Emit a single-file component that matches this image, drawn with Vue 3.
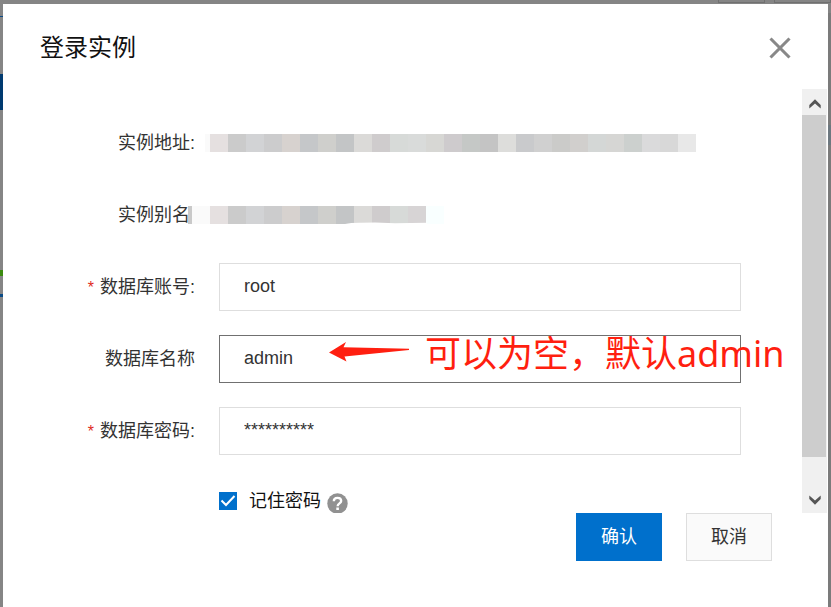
<script setup>
import { ref } from 'vue'

const account = ref('root')
const database = ref('admin')
const password = ref('**********')
const remember = ref(true)

const addressTiles = [
  '#e5e0e0', '#cbcbcb', '#d2d3d5', '#cccccd', '#d7d2cf', '#c5c7c9', '#cfcfcc', '#c3c5c6', '#dbdad8',
  '#cfcccd', '#d7dad8', '#d9dbda', '#d7d7d4', '#cecbcd', '#c5c8c6', '#c4c4c4', '#dddddb', '#c9cacc',
  '#d0d0d0', '#cbcbc9', '#d1cfcd', '#d4d7d6', '#d6d6d4', '#ccd0ce', '#dadadb', '#d8d8d8', '#e8e8e8'
]
const aliasTiles = [...addressTiles.slice(0, 11), '#d7d4d5', '#f9ffff']
</script>

<template>
  <div class="page">
    <div class="backdrop" aria-hidden="true">
      <i class="bg-line"></i>
      <i class="bg-nav"></i>
      <i class="bg-leaf"></i>
      <i class="bg-mark"></i>
      <i class="bg-box one"></i>
      <i class="bg-box two"></i>
      <i class="bg-right"></i>
      <i class="bg-check"></i>
    </div>

    <section class="dialog" role="dialog" aria-labelledby="dialog-title">
      <header class="head">
        <h1 id="dialog-title">登录实例</h1>
        <button class="close" type="button" aria-label="关闭">
          <svg viewBox="0 0 22 22" width="22" height="22">
            <path d="M1.500 1.500 20.500 20.500M20.500 1.500 1.500 20.500" fill="none" stroke="#888" stroke-width="3.100" />
          </svg>
        </button>
      </header>

      <form id="login" class="body" @submit.prevent>
        <div class="fields">
          <div class="row">
            <span class="label">实例地址:</span>
            <div class="mosaic">
              <i class="edge"></i>
              <i v-for="(c, n) in addressTiles" :key="n" class="tile" :style="{ background: c }"></i>
            </div>
          </div>
          <div class="row">
            <span class="label short">实例别名</span>
            <div class="mosaic wide">
              <i class="sliver"></i>
              <i class="pale"></i>
              <i v-for="(c, n) in aliasTiles" :key="n" class="tile" :style="{ background: c }"></i>
              <svg class="smear" viewBox="0 0 82 3" width="82" height="3"><path d="M0 3Q6 1.700 16 1.800L30 1.400 50 2.200 82 1.700V3Z" fill="#fff" /></svg>
            </div>
          </div>
          <div class="row">
            <label class="label" for="account"><b>*</b>数据库账号:</label>
            <div class="control"><input id="account" v-model="account" class="text" type="text" /></div>
          </div>
          <div class="row">
            <label class="label" for="database">数据库名称</label>
            <div class="control">
              <input id="database" v-model="database" class="text active" type="text" />
              <svg class="arrow" viewBox="0 0 82 22" width="82" height="22">
                <path d="M0 11.500 17 1 14.500 6.200 80 7.800V9L15.500 15.500 17.500 20.500Z" fill="#ff1f10" />
              </svg>
              <span class="note">可以为空，默认admin</span>
            </div>
          </div>
          <div class="row">
            <label class="label" for="password"><b>*</b>数据库密码:</label>
            <div class="control"><input id="password" v-model="password" class="text" type="text" autocomplete="off" /></div>
          </div>
          <div class="row remember">
            <input id="remember" v-model="remember" class="check" type="checkbox" />
            <svg class="tick" viewBox="0 0 18 18" width="18" height="18" aria-hidden="true">
              <path d="M2.500 8.500 7 13 15.500 4" fill="none" stroke="#fff" stroke-width="2" />
            </svg>
            <label for="remember">记住密码</label>
            <svg class="help" viewBox="0 0 21 21" width="21" height="21" aria-hidden="true">
              <circle cx="10.500" cy="10.500" r="10.200" fill="#919191" />
              <path d="M6.800 8.300C6.800 6 8.300 4.900 10.500 4.900S14.200 6.100 14.200 8C14.200 10.200 10.600 10.600 10.600 13.200" fill="none" stroke="#fff" stroke-width="2.300" />
              <rect x="9.300" y="14.500" width="2.600" height="2.500" fill="#fff" />
            </svg>
          </div>
        </div>
        <div class="scroll" aria-hidden="true">
          <div class="cap up">
            <svg viewBox="0 0 12 10" width="12" height="10"><path d="M.3 9.500V6L6 .3 11.700 6V9.500L6 4.400Z" fill="#555" /></svg>
          </div>
          <div class="track"><div class="thumb"></div></div>
          <div class="cap">
            <svg viewBox="0 0 12 10" width="12" height="10"><path d="M.3 .5V4L6 9.700 11.700 4V.5L6 5.600Z" fill="#555" /></svg>
          </div>
        </div>
      </form>

      <footer class="foot">
        <button class="btn primary" type="submit" form="login">确认</button>
        <button class="btn" type="button">取消</button>
      </footer>
    </section>
  </div>
</template>

<style>
body {
  background: #858585;
}
</style>

<style scoped>
* {
  box-sizing: border-box;
}
.page {
  position: relative;
  display: flex;
  min-height: 100vh;
  padding: 4px 3px 0;
  overflow: hidden;
  font-family: "Liberation Sans", "Noto Sans CJK SC", sans-serif;
  font-size: 18px;
  line-height: 24px;
  color: #333;
}
.backdrop {
  position: absolute;
  inset: 0;
  background: #858585;
}
.backdrop i {
  position: absolute;
}
.bg-line {
  left: 0;
  top: 16px;
  width: 3px;
  height: 1px;
  background: #0a4a85;
}
.bg-nav {
  left: 0;
  top: 74px;
  width: 3px;
  height: 36px;
  background: #003a70;
}
.bg-leaf {
  left: 0;
  top: 270px;
  width: 3px;
  height: 6px;
  background: #3b8a10;
}
.bg-mark {
  left: 0;
  top: 294px;
  width: 3px;
  height: 3px;
  background: #0a4a85;
}
.bg-box {
  top: 0;
  height: 3px;
  border: 1px solid #707070;
  border-top: 0;
}
.bg-box.one {
  right: 66px;
  width: 47px;
}
.bg-box.two {
  right: 0;
  width: 57px;
}
.bg-right {
  right: 0;
  top: 13px;
  bottom: 0;
  width: 3px;
  background: #7b7b7b;
}
.bg-check {
  right: 0;
  top: 125px;
  width: 3px;
  height: 20px;
  background: #6d7880;
}
.dialog {
  position: relative;
  flex: 1;
  min-width: 0;
  background: #fff;
}
.head {
  display: flex;
  align-items: center;
  justify-content: space-between;
  padding: 28px 37px 25px 37px;
}
h1 {
  margin: 0;
  font-size: 24px;
  line-height: 32px;
  font-weight: 400;
  color: #111;
}
.close {
  display: flex;
  padding: 0;
  border: 0;
  background: none;
}
.body {
  display: flex;
  padding-right: 1px;
  overflow: hidden;
}
.fields {
  flex: 1;
  min-width: 0;
  padding: 30px 61px 0 0;
}
.row {
  display: flex;
  align-items: center;
  gap: 24px;
  height: 48px;
  margin-bottom: 24px;
}
.label {
  flex: none;
  width: 192px;
  text-align: right;
  white-space: nowrap;
}
.label.short {
  padding-right: 5px;
}
.label b {
  margin-right: 6px;
  font-size: 16px;
  font-weight: 400;
  color: #e02b1d;
}
.control {
  position: relative;
  flex: 1;
  min-width: 0;
}
.text {
  display: block;
  width: 100%;
  height: 48px;
  padding: 0 24px 2px;
  border: 1px solid #dedede;
  border-radius: 0;
  outline: 0;
  background: #fff;
  font: inherit;
  color: #333;
}
.text.active {
  border-color: #707070;
}
.mosaic {
  position: relative;
  display: flex;
  height: 18px;
  margin-left: -14px;
}
.mosaic.wide {
  margin-left: -31px;
}
.edge {
  width: 5px;
  background: #fafafa;
}
.sliver {
  width: 4px;
  background: #c9c9c9;
}
.pale {
  width: 18px;
  background: #fafafa;
}
.tile {
  width: 18px;
}
.smear {
  position: absolute;
  left: 157px;
  bottom: 0;
}
.arrow {
  position: absolute;
  left: 110px;
  top: 6px;
}
.note {
  position: absolute;
  left: 206px;
  top: -5px;
  font-family: "Noto Sans", "Noto Sans CJK SC", sans-serif;
  font-size: 36px;
  line-height: 48px;
  white-space: nowrap;
  color: #ff1f10;
}
.remember {
  position: relative;
  gap: 0;
  height: 34px;
  margin: 0;
  padding: 10px 0 0 216px;
  color: #111;
}
.check {
  appearance: none;
  width: 18px;
  height: 18px;
  margin: 0;
  border: 1px solid #c0c0c0;
  background: #fff;
}
.check:checked {
  border-color: #0070cc;
  background: #0070cc;
}
.tick {
  margin: 0 12px 0 -18px;
  pointer-events: none;
  visibility: hidden;
}
.check:checked + .tick {
  visibility: visible;
}
.help {
  margin: 4px 0 0 6px;
}
.scroll {
  display: flex;
  flex-direction: column;
  width: 25px;
  background: #f0f0f0;
}
.cap {
  display: flex;
  align-items: center;
  justify-content: center;
  height: 26px;
}
.cap.up {
  padding-top: 3px;
}
.track {
  flex: 1;
}
.thumb {
  width: 24px;
  height: 92%;
  background: #cdcdcd;
}
.foot {
  display: flex;
  justify-content: flex-end;
  gap: 24px;
  padding: 0 56px 46px 0;
}
.btn {
  width: 86px;
  height: 48px;
  padding: 0;
  border: 1px solid #dedede;
  background: #fafafa;
  font: inherit;
  color: #333;
}
.btn.primary {
  border-color: #0070cc;
  background: #0070cc;
  color: #fff;
}
</style>
